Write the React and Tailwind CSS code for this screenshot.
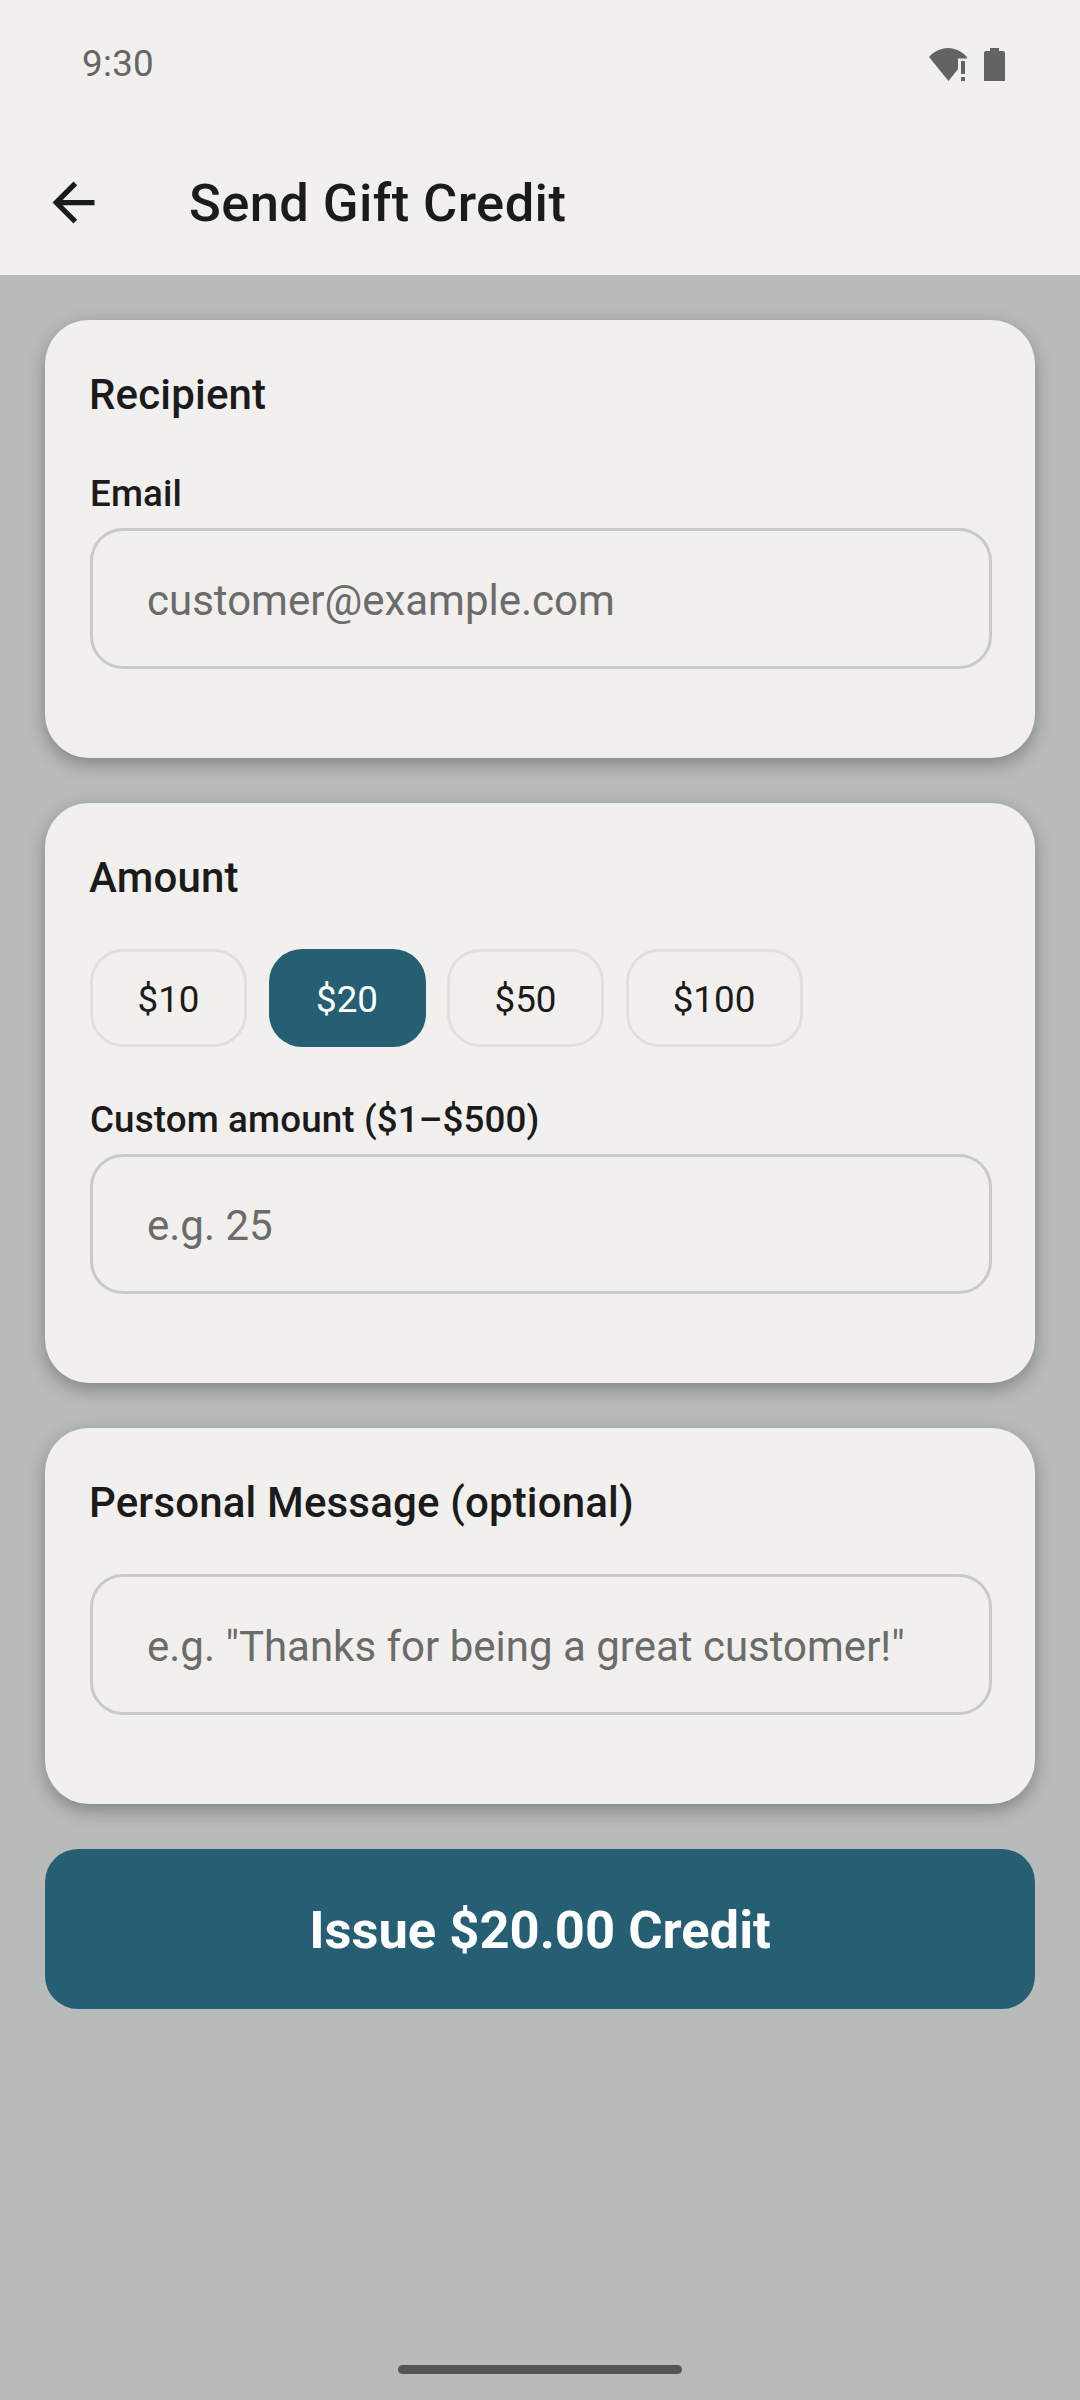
const font = { fontFamily: "Roboto, sans-serif" };

const Field = ({ placeholder }) => (
  <div className="flex h-[140.5px] items-center rounded-[33px] border-[3px] border-[#c9c9c7] pt-[4px] pl-[54px] text-[42px] text-[#6b6b69]">
    {placeholder}
  </div>
);

const Chip = ({ label, active, width }) => (
  <div
    className={
      active
        ? "flex h-[98px] items-center justify-center rounded-[33px] bg-[#265f74] pt-[4px] text-[36.75px] text-white " + width
        : "flex h-[98px] items-center justify-center rounded-[33px] border-[3px] border-[#e0dfdd] pt-[4px] text-[36.75px] text-[#1b1b1b] " + width
    }
  >
    {label}
  </div>
);

const Card = ({ title, children }) => (
  <div className="rounded-[44px] bg-[#f1f0ee] pt-[51px] pr-[43px] pb-[89px] pl-[45px] shadow-[0_6px_18px_rgba(0,0,0,0.3)]">
    <h2 className="-ml-[1px] text-[42px] leading-[47px] font-medium tracking-[0.17px] text-[#1b1b1b]">{title}</h2>
    {children}
  </div>
);

export default function App() {
  return (
    <div className="flex h-[2400px] w-[1080px] flex-col bg-[#b9bbba]" style={font}>
      <div className="h-[275px] bg-[#f1f0ee]">
        <div className="flex h-[126px] items-center justify-between pt-[2px] pr-[75px] pl-[82px]">
          <span className="text-[36.75px] tracking-[0.3px] text-[#666666]">9:30</span>
          <div className="flex items-center gap-[16px]">
            <svg width="39" height="33" viewBox="0 0 39 33" fill="#636363">
              <path d="M0 9C5 3.500 11.500 0 19 0c7.500 0 14 3.500 19 9v1.500H29V21l-9.500 12z" />
              <rect x="32" y="13" width="4" height="13" />
              <rect x="32" y="29" width="4" height="4" />
            </svg>
            <svg width="21" height="33" viewBox="0 0 21 33" fill="#636363">
              <path d="M6 0h9v3h4a2 2 0 0 1 2 2v28H0V5a2 2 0 0 1 2-2h4z" />
            </svg>
          </div>
        </div>
        <div className="flex h-[149px] items-center pt-[3px]">
          <svg className="ml-[42px]" width="63" height="63" viewBox="0 0 24 24" fill="#1b1b1b">
            <path d="M20 11H7.830l5.590-5.590L12 4l-8 8 8 8 1.410-1.410L7.830 13H20v-2z" />
          </svg>
          <h1 className="ml-[84px] pt-[2px] text-[52.5px] font-medium tracking-[0.4px] text-[#1b1b1b]">Send Gift Credit</h1>
        </div>
      </div>

      <div className="flex flex-col gap-[45px] px-[45px] pt-[45px]">
        <Card title="Recipient">
          <label className="mt-[52px] mb-[10px] block text-[36.75px] leading-[48px] font-medium tracking-[0.13px] text-[#1b1b1b]">Email</label>
          <Field placeholder="customer@example.com" />
        </Card>

        <Card title="Amount">
          <div className="mt-[48px] flex gap-[21.5px]">
            <Chip label="$10" width="w-[157px]" />
            <Chip label="$20" active width="w-[157px]" />
            <Chip label="$50" width="w-[157px]" />
            <Chip label="$100" width="w-[177px]" />
          </div>
          <label className="mt-[49px] mb-[10px] block text-[36.75px] leading-[48px] font-medium tracking-[0.13px] text-[#1b1b1b]">Custom amount ($1–$500)</label>
          <Field placeholder="e.g. 25" />
        </Card>

        <Card title="Personal Message (optional)">
          <div className="mt-[48px]">
            <Field placeholder={'e.g. "Thanks for being a great customer!"'} />
          </div>
        </Card>

        <div className="flex h-[160px] items-center justify-center rounded-[33px] bg-[#265f74] pt-[4px] text-[52.5px] font-bold text-white">
          Issue $20.00 Credit
        </div>
      </div>

      <div className="mt-auto mb-[26px] h-[9px] w-[284px] self-center rounded-full bg-[#555555]" />
    </div>
  );
}
